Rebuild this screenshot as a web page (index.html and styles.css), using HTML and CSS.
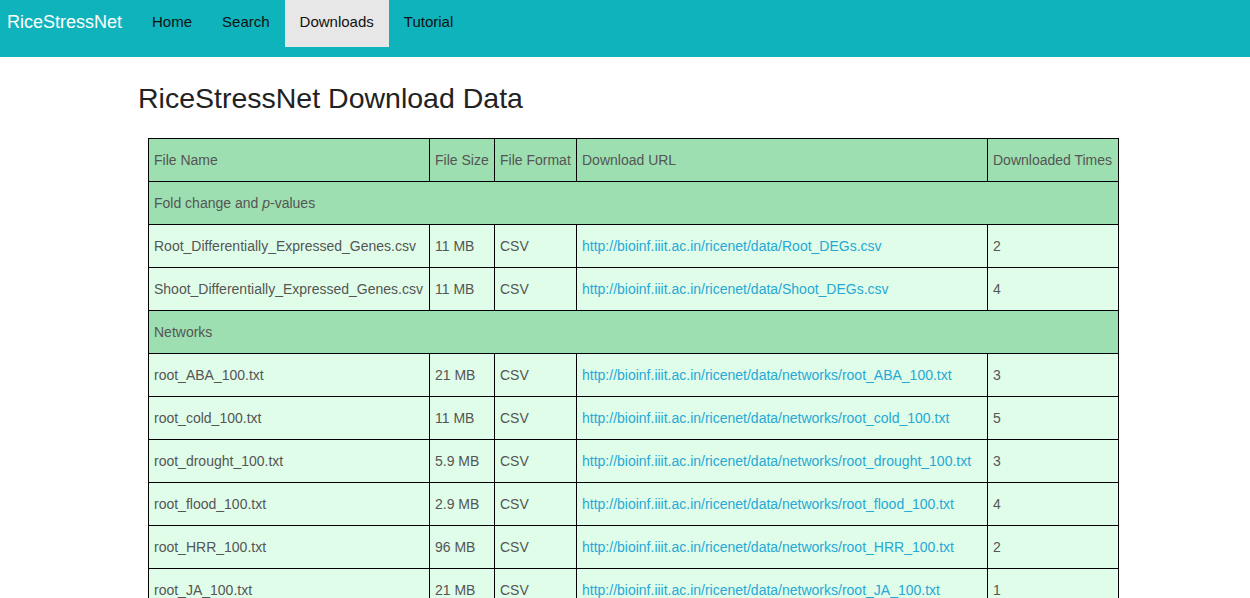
FILE: index.html
```html
<!DOCTYPE html>
<html>
<head>
<meta charset="utf-8">
<title>RiceStressNet Download Data</title>
<link rel="stylesheet" href="styles.css">
</head>
<body>
<nav class="navbar">
  <a class="brand" href="#">RiceStressNet</a>
  <ul class="nav">
    <li><a href="#">Home</a></li>
    <li><a href="#">Search</a></li>
    <li class="active"><a href="#">Downloads</a></li>
    <li><a href="#">Tutorial</a></li>
  </ul>
</nav>
<main class="content">
  <h1 class="title">RiceStressNet Download Data</h1>
  <table class="data">
    <colgroup>
      <col class="c1"><col class="c2"><col class="c3"><col class="c4"><col class="c5">
    </colgroup>
    <tr class="head"><td>File Name</td><td>File Size</td><td>File Format</td><td>Download URL</td><td>Downloaded Times</td></tr>
    <tr class="group"><td colspan="5">Fold change and <i>p</i>-values</td></tr>
    <tr><td>Root_Differentially_Expressed_Genes.csv</td><td>11 MB</td><td>CSV</td><td><a href="#">http://bioinf.iiit.ac.in/ricenet/data/Root_DEGs.csv</a></td><td>2</td></tr>
    <tr><td>Shoot_Differentially_Expressed_Genes.csv</td><td>11 MB</td><td>CSV</td><td><a href="#">http://bioinf.iiit.ac.in/ricenet/data/Shoot_DEGs.csv</a></td><td>4</td></tr>
    <tr class="group"><td colspan="5">Networks</td></tr>
    <tr><td>root_ABA_100.txt</td><td>21 MB</td><td>CSV</td><td><a href="#">http://bioinf.iiit.ac.in/ricenet/data/networks/root_ABA_100.txt</a></td><td>3</td></tr>
    <tr><td>root_cold_100.txt</td><td>11 MB</td><td>CSV</td><td><a href="#">http://bioinf.iiit.ac.in/ricenet/data/networks/root_cold_100.txt</a></td><td>5</td></tr>
    <tr><td>root_drought_100.txt</td><td>5.9 MB</td><td>CSV</td><td><a href="#">http://bioinf.iiit.ac.in/ricenet/data/networks/root_drought_100.txt</a></td><td>3</td></tr>
    <tr><td>root_flood_100.txt</td><td>2.9 MB</td><td>CSV</td><td><a href="#">http://bioinf.iiit.ac.in/ricenet/data/networks/root_flood_100.txt</a></td><td>4</td></tr>
    <tr><td>root_HRR_100.txt</td><td>96 MB</td><td>CSV</td><td><a href="#">http://bioinf.iiit.ac.in/ricenet/data/networks/root_HRR_100.txt</a></td><td>2</td></tr>
    <tr><td>root_JA_100.txt</td><td>21 MB</td><td>CSV</td><td><a href="#">http://bioinf.iiit.ac.in/ricenet/data/networks/root_JA_100.txt</a></td><td>1</td></tr>
  </table>
</main>
</body>
</html>
```
FILE: styles.css
```css
* { box-sizing: border-box; }
body {
  margin: 0;
  font-family: "Liberation Sans", Arial, sans-serif;
  font-size: 14px;
  line-height: 20px;
  color: #333;
  background: #fff;
}
.navbar {
  display: flex;
  align-items: flex-start;
  height: 57px;
  background: #0fb3bc;
}
.brand {
  padding: 11px 15px 0 7px;
  font-size: 18px;
  line-height: 22px;
  color: #fff;
  text-decoration: none;
}
.nav {
  display: flex;
  margin: 0;
  padding: 0;
  list-style: none;
}
.nav a {
  display: block;
  padding: 12px 15px 15px;
  font-size: 15px;
  line-height: 20px;
  color: #111;
  text-decoration: none;
}
.nav .active a {
  background: #e7e7e7;
}
.content {
  padding: 0 0 0 138px;
}
.title {
  margin: 23px 0 22px;
  font-size: 28.5px;
  line-height: 36px;
  font-weight: 400;
  color: #222;
}
.data {
  margin-left: 10px;
  width: 971px;
  border-collapse: collapse;
  table-layout: fixed;
}
.c1 { width: 281px; }
.c2 { width: 65px; }
.c3 { width: 82px; }
.c4 { width: 411px; }
.c5 { width: 131px; }
.data td {
  height: 43px;
  padding: 0 5px;
  border: 1px solid #000;
  background: #e0fde9;
  color: #555;
  font-size: 14px;
  white-space: nowrap;
  overflow: hidden;
  vertical-align: middle;
}
.data tr.head td,
.data tr.group td {
  background: #9ddfb0;
}
.data a {
  color: #27a8d6;
  text-decoration: none;
}
```
